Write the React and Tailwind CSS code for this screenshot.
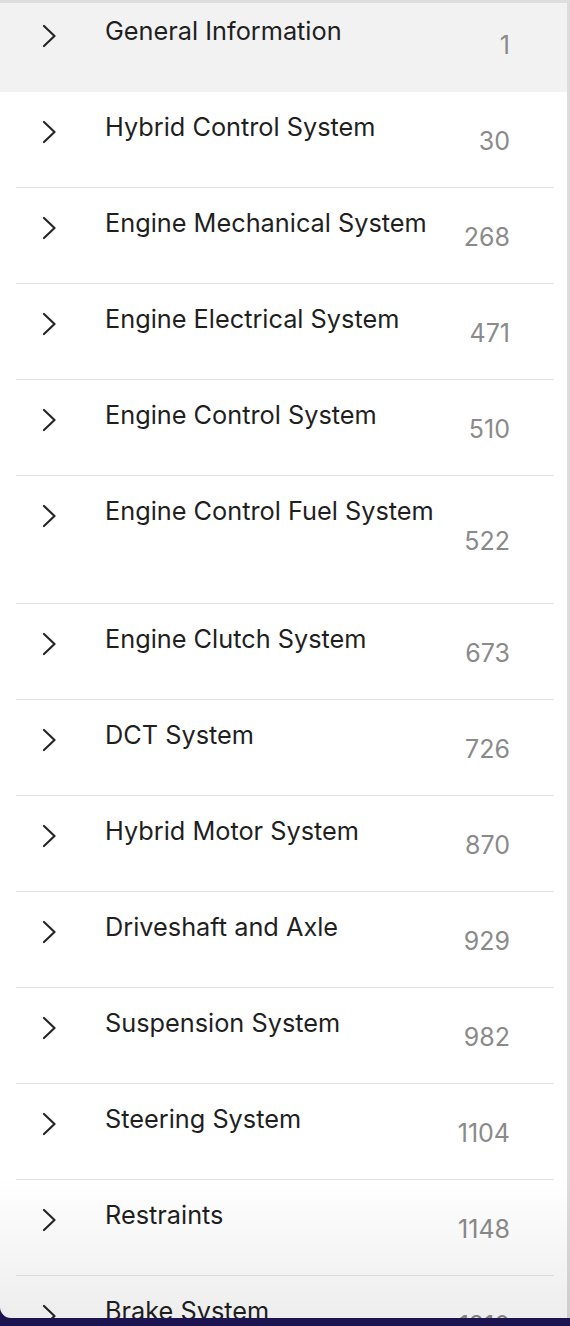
import React from "react";

const items = [
  ["Hybrid Control System", "30"],
  ["Engine Mechanical System", "268"],
  ["Engine Electrical System", "471"],
  ["Engine Control System", "510"],
  ["Engine Control Fuel System", "522", true],
  ["Engine Clutch System", "673"],
  ["DCT System", "726"],
  ["Hybrid Motor System", "870"],
  ["Driveshaft and Axle", "929"],
  ["Suspension System", "982"],
  ["Steering System", "1104"],
  ["Restraints", "1148"],
  ["Brake System", "1210"],
];

function Chevron() {
  return (
    <svg width="14" height="24" viewBox="0 0 14 24" fill="none" className="shrink-0">
      <path d="M2 2 L12.5 12 L2 22" stroke="#262626" strokeWidth="2.2" strokeLinecap="round" strokeLinejoin="round" />
    </svg>
  );
}

function Row({ title, num, wrap, first }) {
  const outer = first
    ? "bg-[#f2f2f2] h-[89px] pt-[11px] pl-[42px] pr-[57px]"
    : "ml-[16px] mr-[13px] border-b border-[#e4e4e4] pt-[18px] pl-[26px] pr-[44px] " + (wrap ? "h-[128px]" : "h-[96px]");
  return (
    <div className={outer + " flex items-start"}>
      <div className="mt-[10px] w-[14px]">
        <Chevron />
      </div>
      <div className="ml-[49px] flex-1 flex flex-wrap items-start justify-between">
        <div className="text-[25.3px] leading-[34px] text-[#1f1f1f]">{title}</div>
        <div
          className={
            (wrap ? "w-full text-right -mt-[4px] " : "mt-[14px] ") +
            "text-[25px] leading-[34px] text-[#8a8a8a]"
          }
        >
          {num}
        </div>
      </div>
    </div>
  );
}

export default function App() {
  return (
    <div
      className="w-[570px] h-[1326px] bg-gradient-to-b from-[#2c1d86] to-[#1c1450] overflow-hidden relative"
      style={{ fontFamily: "Inter, 'Noto Sans', sans-serif" }}
    >
      <div className="h-[1318px] bg-white rounded-bl-[11px] overflow-hidden relative border-t-[3px] border-[#dedede]">
        <div className="h-full border-r-[3px] border-[#dcdcdc] overflow-hidden">
          <Row title="General Information" num="1" first />
          {items.map(([t, n, w]) => (
            <Row key={t} title={t} num={n} wrap={w} />
          ))}
        </div>
        <div className="absolute left-0 right-0 bottom-0 h-[140px] bg-gradient-to-b from-transparent to-[#00000012] pointer-events-none" />
      </div>
    </div>
  );
}
